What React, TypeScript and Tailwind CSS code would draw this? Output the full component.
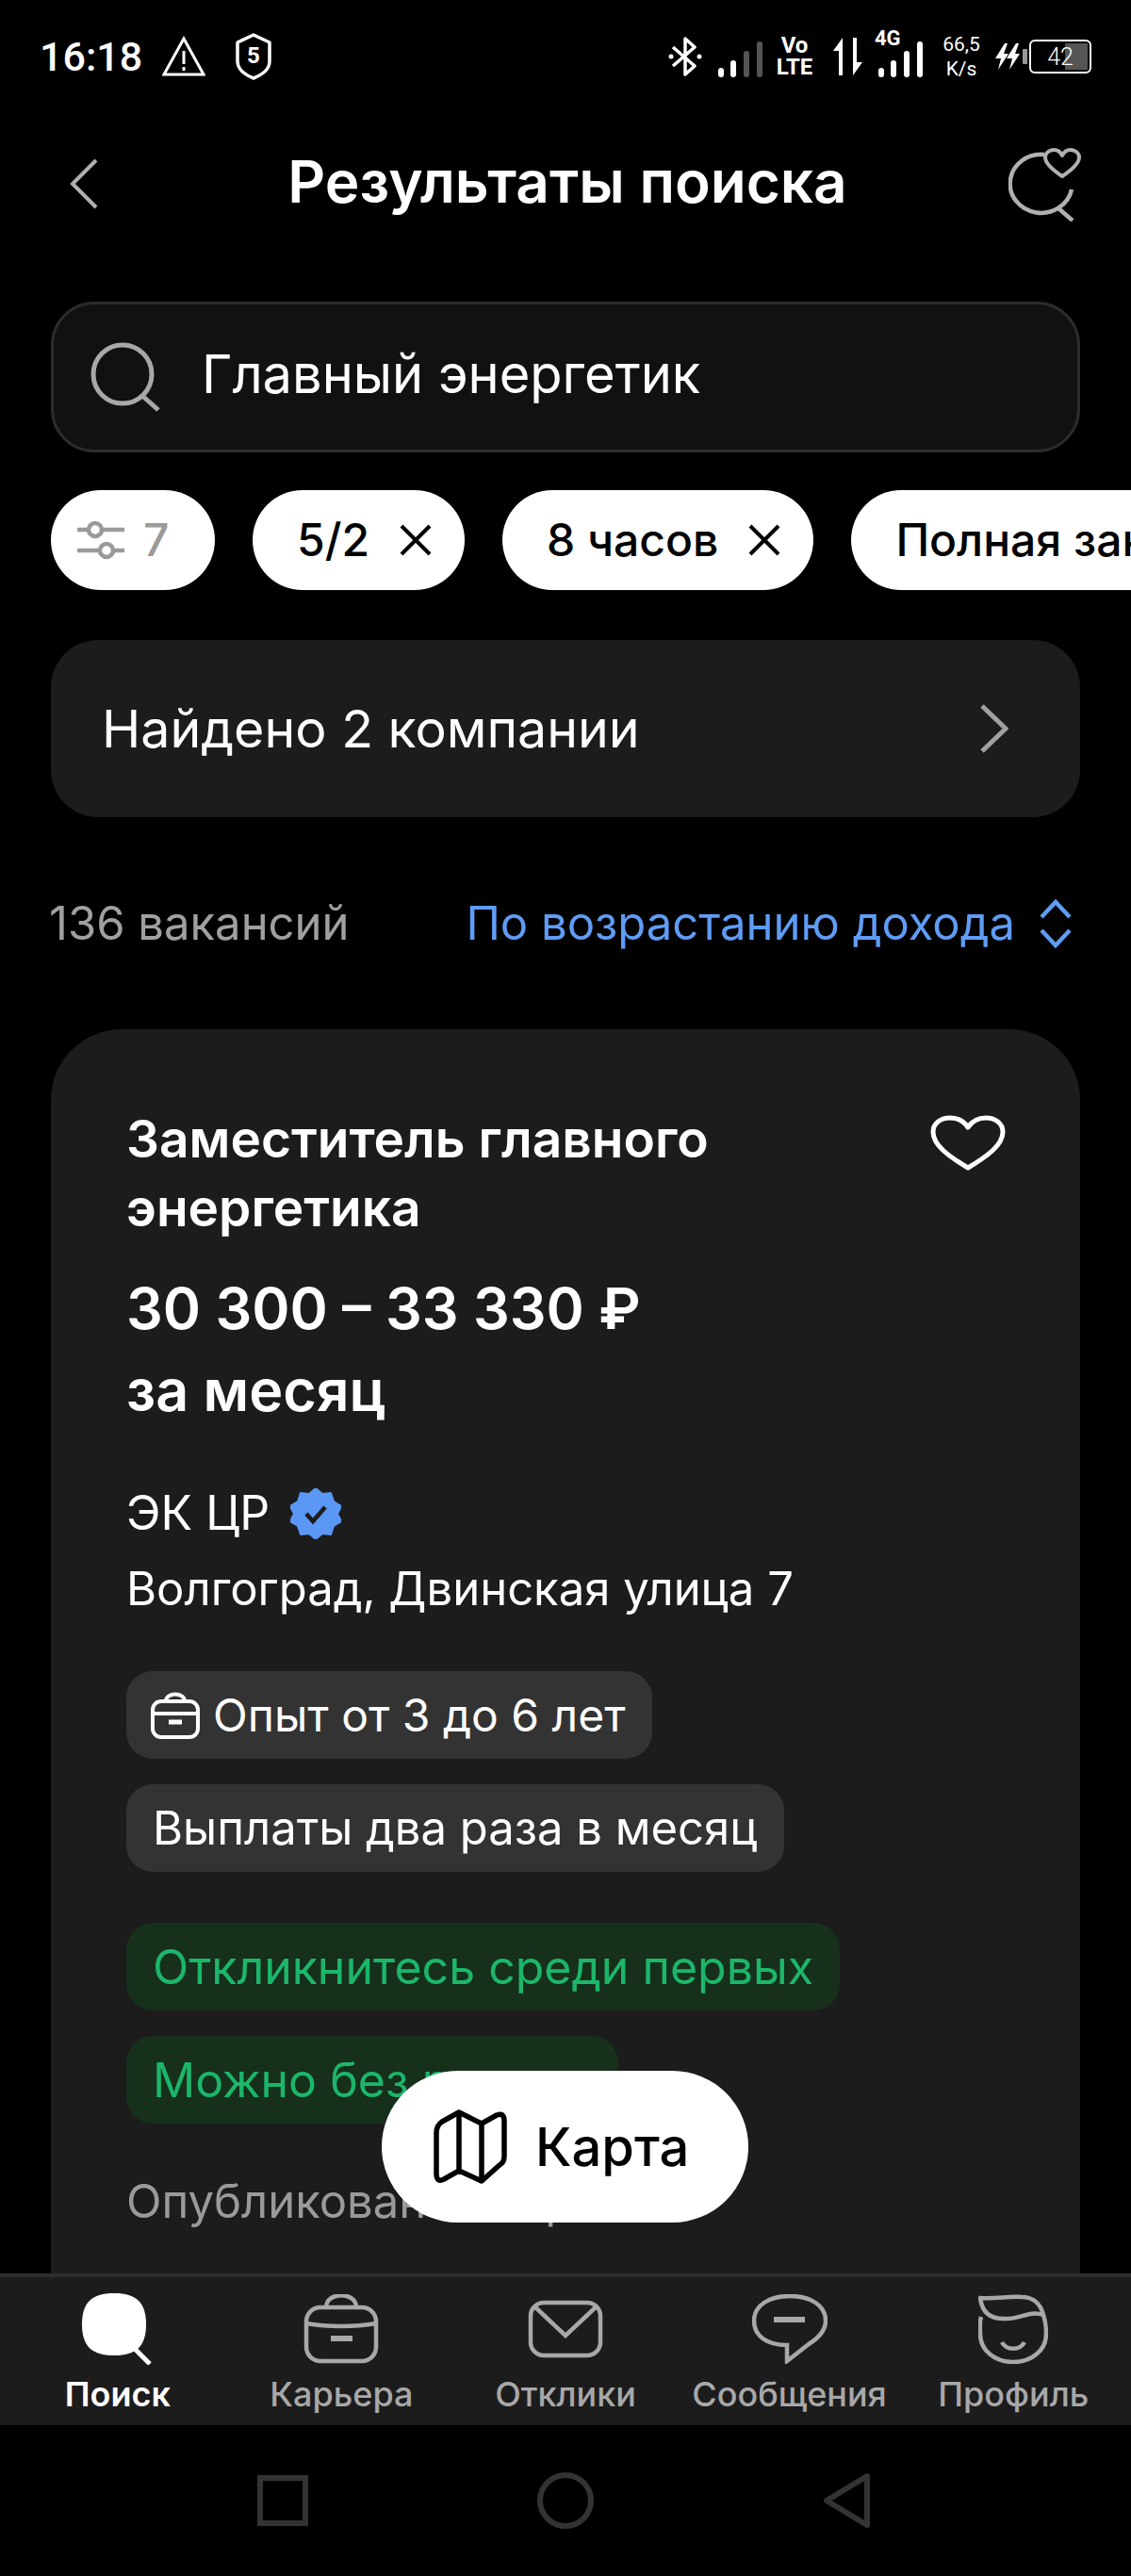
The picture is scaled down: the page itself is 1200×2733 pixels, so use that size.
const Bars = ({ dim = false }: { dim?: boolean }) => (
  <svg width="48" height="38" viewBox="0 0 48 38">
    <rect x="0" y="28" width="6" height="10" rx="3" fill="#fff" />
    <rect x="13" y="20" width="6" height="18" rx="3" fill="#fff" />
    <rect x="27" y="10" width="6" height="28" rx="3" fill={dim ? "#555" : "#fff"} />
    <rect x="41" y="0" width="6" height="38" rx="3" fill={dim ? "#555" : "#fff"} />
  </svg>
);

function StatusBar() {
  return (
    <div className="flex h-[120px] items-start justify-between pl-[42px] pr-[42px] pt-[35px] font-['Roboto',sans-serif] text-white">
      <div className="flex h-[50px] items-center">
        <span className="text-[43px] font-medium leading-none">16:18</span>
        <svg className="ml-[21px]" width="46" height="44" viewBox="0 0 46 44" fill="none" stroke="#fff" strokeWidth="3">
          <path d="M23 3 L44 41 H2 Z" strokeLinejoin="miter" />
          <path d="M23 16 V30 M23 33 V37" />
        </svg>
        <svg className="ml-[32px]" width="38" height="50" viewBox="0 0 38 50" fill="none" stroke="#fff" strokeWidth="3.5">
          <path d="M19 2 L36 10 V30 C36 39 27 45 19 48 C11 45 2 39 2 30 V10 Z" strokeLinejoin="round" />
          <text x="19" y="32" textAnchor="middle" fill="#fff" stroke="none" fontSize="24" fontWeight="700" fontFamily="Roboto, sans-serif">5</text>
        </svg>
      </div>
      <div className="flex h-[50px] items-center">
        <svg width="38" height="42" viewBox="0 0 38 42" fill="none" stroke="#fff" strokeWidth="3.5">
          <path d="M6 11 L29 31 L19 40 V2 L29 11 L6 31" strokeLinejoin="round" />
          <circle cx="4" cy="21" r="2.5" fill="#fff" stroke="none" />
          <circle cx="34" cy="21" r="2.5" fill="#fff" stroke="none" />
        </svg>
        <div className="ml-[16px] mt-[5px]">
          <Bars dim />
        </div>
        <div className="ml-[12px] flex w-[42px] flex-col items-center text-[24px] font-bold leading-[23px]">
          <span>Vo</span>
          <span>LTE</span>
        </div>
        <svg className="ml-[20px]" width="31" height="40" viewBox="0 0 31 40" fill="#fff">
          <path d="M10 0 V40 H6 V14 H0 Z" />
          <path d="M21 40 V0 H25 V26 H31 Z" />
        </svg>
        <div className="relative ml-[13px] h-[46px] w-[52px]">
          <span className="absolute left-0 top-[-7px] text-[22px] font-bold leading-[22px]">4G</span>
          <div className="absolute left-[4px] top-[7px]">
            <Bars />
          </div>
        </div>
        <div className="ml-[20px] flex w-[40px] flex-col items-center text-[21px] font-normal leading-[26px]">
          <span>66,5</span>
          <span>K/s</span>
        </div>
        <svg className="ml-[16px]" width="34" height="28" viewBox="0 0 34 28" fill="#fff">
          <path d="M10 0 L0 16 H6 L3 28 L14 11 H9 L13 0 Z" />
          <path d="M22 0 L12 16 H18 L15 28 L26 11 H21 L25 0 Z" />
          <rect x="29" y="6" width="5" height="16" rx="1" fill="#999" />
        </svg>
        <div className="relative ml-[2px] flex h-[36px] w-[66px] items-center justify-center overflow-hidden rounded-[6px] border-2 border-white">
          <div className="absolute bottom-[2px] right-[2px] top-[2px] w-[24px] bg-[#555]" />
          <span className="relative text-[25px] font-light leading-none">42</span>
        </div>
      </div>
    </div>
  );
}

function Header() {
  return (
    <div className="flex h-[150px] items-center justify-between pl-[74px] pr-[52px]">
      <svg width="30" height="54" viewBox="0 0 30 54" fill="none" stroke="#b0b0b0" strokeWidth="4">
        <path d="M28 2 L3 27 L28 52" />
      </svg>
      <h1 className="ml-[30px] mb-[4px] text-[62px] font-semibold leading-none text-white">Результаты поиска</h1>
      <svg width="78" height="80" viewBox="0 0 78 80" fill="none" stroke="#b0b0b0" strokeWidth="4.5">
        <path d="M38 9 A33 31 0 1 0 67 46" />
        <path d="M53 66 L68 79" />
        <path d="M57 32 C45 24 39 18 39 12 C39 4 52 0 57 10 C62 0 75 4 75 12 C75 18 69 24 57 32 Z" strokeWidth="4" strokeLinejoin="round" />
      </svg>
    </div>
  );
}

function Chip({ label }: { label: string }) {
  return (
    <div className="flex h-[106px] shrink-0 items-center gap-[32px] whitespace-nowrap rounded-full bg-white pl-[47px] pr-[35px] text-[48px] font-medium text-black">
      {label}
      <svg width="34" height="34" viewBox="0 0 34 34" fill="none" stroke="#000" strokeWidth="4">
        <path d="M2 2 L32 32 M32 2 L2 32" />
      </svg>
    </div>
  );
}

function Tag({ children, green, className = "w-fit" }: { children: React.ReactNode; green?: boolean; className?: string }) {
  return (
    <div
      className={`flex h-[93px] items-center overflow-hidden whitespace-nowrap rounded-[28px] px-[28px] leading-none ${className} ${
        green ? "bg-[#16301c] text-[50px] text-[#1cb66a]" : "bg-[#333333] text-[49px] text-white"
      }`}
    >
      {children}
    </div>
  );
}

function Results() {
  return (
    <main className="min-h-0 flex-1 overflow-hidden">
      <div className="px-[54px]">
        <div className="mt-[50px] flex h-[160px] items-center rounded-[46px] border-[3px] border-[#2c2c2c] bg-[#111111] pl-[39px]">
          <svg width="76" height="74" viewBox="0 0 76 74" fill="none" stroke="#a8a8a8" strokeWidth="5">
            <circle cx="34" cy="34" r="31" />
            <path d="M54 56 L72 72" />
          </svg>
          <span className="mb-[6px] ml-[42px] text-[56px] text-white">Главный энергетик</span>
        </div>
      </div>

      <div className="mt-[40px] flex gap-[40px] overflow-hidden pl-[54px]">
        <div className="flex h-[106px] w-[174px] shrink-0 items-center gap-[20px] rounded-full bg-white pl-[28px] text-[48px] font-medium text-[#9a9a9a]">
          <svg width="50" height="50" viewBox="0 0 50 50" fill="none" stroke="#9a9a9a" strokeWidth="4.5">
            <path d="M0 14 H12 M26 14 H50 M0 36 H24 M38 36 H50" />
            <circle cx="19" cy="14" r="7" />
            <circle cx="31" cy="36" r="7" />
          </svg>
          7
        </div>
        <Chip label="5/2" />
        <Chip label="8 часов" />
        <Chip label="Полная занятость" />
      </div>

      <div className="mx-[54px] mt-[53px] flex h-[188px] items-center justify-between rounded-[50px] bg-[#1c1c1c] pl-[54px] pr-[76px]">
        <span className="text-[55.5px] text-white">Найдено 2 компании</span>
        <svg width="30" height="52" viewBox="0 0 30 52" fill="none" stroke="#a0a0a0" strokeWidth="5">
          <path d="M2 2 L27 26 L2 50" />
        </svg>
      </div>

      <div className="flex h-[225px] items-center justify-between pl-[52px] pr-[62px] text-[49px]">
        <span className="text-[#a0a0a0]">136 вакансий</span>
        <div className="flex items-center gap-[25px] text-[#5f9cf5]">
          <span>По возрастанию дохода</span>
          <svg width="36" height="52" viewBox="0 0 36 52" fill="none" stroke="#5f9cf5" strokeWidth="4.5">
            <path d="M3 19 L18 3 L33 19 M3 33 L18 49 L33 33" />
          </svg>
        </div>
      </div>

      <article className="relative mx-[54px] rounded-[75px] bg-[#1c1c1c] pl-[80px] pr-[80px] pt-[80px] pb-[200px]">
        <svg className="absolute right-[79px] top-[91px]" width="80" height="60" viewBox="0 0 80 60" fill="none" stroke="#fff" strokeWidth="5">
          <path d="M40 56 C20 44 3 32 3 18 C3 8 12 3 21 3 C29 3 36 7 40 13 C44 7 51 3 59 3 C68 3 77 8 77 18 C77 32 60 44 40 56 Z" strokeLinejoin="round" />
        </svg>
        <h2 className="text-[55px] font-semibold leading-[73px] text-white">
          Заместитель главного
          <br />
          энергетика
        </h2>
        <div className="mt-[27px] text-[61px] font-semibold leading-[87px] text-white">
          30 300 – 33 330 ₽
          <br />
          за месяц
        </div>
        <div className="mt-[46px] flex h-[81px] items-center gap-[22px] text-[50px] text-white">
          ЭК ЦР
          <svg width="54" height="54" viewBox="0 0 54 54">
            <path
              d="M27 0 L34 6 L43 5 L46 14 L54 19 L50 27 L54 35 L46 40 L43 49 L34 48 L27 54 L20 48 L11 49 L8 40 L0 35 L4 27 L0 19 L8 14 L11 5 L20 6 Z"
              fill="#5b97f5"
              stroke="#5b97f5"
              strokeWidth="2"
              strokeLinejoin="round"
            />
            <path d="M17 27 L24 35 L37 20" fill="none" stroke="#1c1c1c" strokeWidth="4.5" />
          </svg>
        </div>
        <div className="h-[80px] text-[49px] leading-[80px] text-white">Волгоград, Двинская улица 7</div>

        <div className="mt-[47px] flex flex-col gap-[27px]">
          <Tag>
            <svg className="-ml-[2px] mr-[14px]" width="52" height="50" viewBox="0 0 52 50" fill="none" stroke="#fff" strokeWidth="4">
              <path d="M16 10 C16 0 36 0 36 10" />
              <rect x="2" y="10" width="48" height="38" rx="9" />
              <path d="M2 23 H50" />
              <path d="M19 32 H33" strokeWidth="5" />
            </svg>
            <span className="text-[48px]">Опыт от 3 до 6 лет</span>
          </Tag>
          <Tag>Выплаты два раза в месяц</Tag>
        </div>
        <div className="mt-[54px] flex flex-col gap-[27px]">
          <Tag green>Откликнитесь среди первых</Tag>
          <Tag green className="w-[522px]">
            Можно без резюме
          </Tag>
        </div>
        <p className="mt-[53px] text-[49px] leading-[60px] text-[#9a9a9a]">Опубликована вчера</p>
      </article>
    </main>
  );
}

function BottomNav() {
  const items = [
    {
      label: "Поиск",
      icon: (
        <svg width="76" height="76" viewBox="0 0 76 76" fill="none">
          <path d="M34 0 C58 0 68 10 68 33 C68 56 58 66 34 66 C10 66 0 56 0 33 C0 10 10 0 34 0 Z" fill="#fff" />
          <path d="M55 58 L72 75" stroke="#fff" strokeWidth="5" />
        </svg>
      ),
    },
    {
      label: "Карьера",
      icon: (
        <svg width="80" height="74" viewBox="0 0 80 74" fill="none" stroke="#a8a8a8" strokeWidth="4.5">
          <path d="M24 14 C24 -3 56 -3 56 14" />
          <rect x="3" y="14" width="74" height="57" rx="15" />
          <path d="M3 31 C25 35 55 35 77 31" />
          <path d="M29 47 H52" strokeWidth="6" />
        </svg>
      ),
    },
    {
      label: "Отклики",
      icon: (
        <svg width="80" height="62" viewBox="0 0 80 62" fill="none" stroke="#a8a8a8" strokeWidth="4.5">
          <rect x="3" y="3" width="74" height="56" rx="14" />
          <path d="M6 6 L40 38 L74 6" />
        </svg>
      ),
    },
    {
      label: "Сообщения",
      icon: (
        <svg width="80" height="74" viewBox="0 0 80 74" fill="none" stroke="#a8a8a8" strokeWidth="4.5">
          <path d="M37 54 C15 54 2 44 2 28 C2 12 18 2 40 2 C62 2 78 12 78 28 C78 40 68 48 60 53 L37 71 Z" strokeLinejoin="miter" />
          <path d="M23 27 H56" strokeWidth="6" />
        </svg>
      ),
    },
    {
      label: "Профиль",
      icon: (
        <svg width="74" height="74" viewBox="0 0 74 74" fill="none" stroke="#a8a8a8" strokeWidth="4.5">
          <path d="M2 4 C20 5 32 2 46 3 C58 3 66 10 69 22 C55 17 45 26 30 26 C14 27 4 20 2 4 Z" strokeLinejoin="round" />
          <path d="M3 24 C1 30 2 36 2 42 C2 60 18 72 37 72 C56 72 72 60 72 42 C72 34 71 28 69 22" />
          <path d="M25 51 C30 60 44 60 49 51" />
        </svg>
      ),
    },
  ];
  return (
    <nav className="grid h-[161px] grid-cols-5 border-t-[4px] border-[#2e2e2e] bg-[#1c1c1c] px-[6px] pt-[17px]">
      {items.map((item, i) => (
        <div key={item.label} className="flex flex-col items-center">
          <div className="flex h-[76px] items-center justify-center">{item.icon}</div>
          <span className={`mt-[10px] text-[36px] leading-[42px] ${i === 0 ? "font-semibold text-white" : "font-medium text-[#a8a8a8]"}`}>
            {item.label}
          </span>
        </div>
      ))}
    </nav>
  );
}

function SystemNav() {
  return (
    <div className="flex h-[160px] items-center justify-center gap-[243px] pr-[4px]">
      <svg width="54" height="54" viewBox="0 0 54 54" fill="none" stroke="#333" strokeWidth="6">
        <rect x="3" y="3" width="48" height="48" />
      </svg>
      <svg width="60" height="60" viewBox="0 0 60 60" fill="none" stroke="#333" strokeWidth="6">
        <circle cx="30" cy="30" r="27" />
      </svg>
      <svg width="50" height="58" viewBox="0 0 50 58" fill="none" stroke="#333" strokeWidth="6">
        <path d="M47 3 L4 29 L47 55 Z" strokeLinejoin="round" />
      </svg>
    </div>
  );
}

export default function App() {
  return (
    <div className="relative flex h-[2733px] w-[1200px] flex-col overflow-hidden bg-black font-['Inter',sans-serif]">
      <StatusBar />
      <Header />
      <Results />
      <button className="absolute left-[405px] top-[2197px] flex h-[161px] w-[389px] items-center justify-start gap-[29px] rounded-full bg-white pl-[54px] text-[56px] font-medium text-black">
        <svg width="80" height="80" viewBox="0 0 80 80" fill="none" stroke="#000" strokeWidth="5.5" strokeLinejoin="round">
          <path d="M4 25 Q4 17 10 13 L28 3 L52 15 L68 6 Q76 3 76 12 V50 Q76 56 71 59 L52 76 L28 65 L12 74 Q4 78 4 68 Z" />
          <path d="M28 3 V65 M52 15 V76" />
        </svg>
        Карта
      </button>
      <BottomNav />
      <SystemNav />
    </div>
  );
}
